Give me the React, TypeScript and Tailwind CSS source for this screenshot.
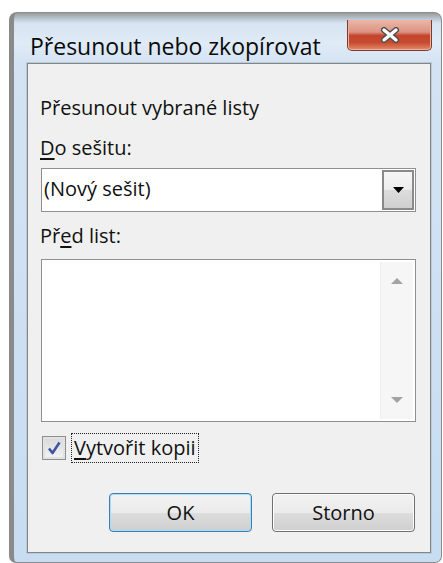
// Windows 7 style "move or copy sheet" dialog
function CloseGlyph() {
  return (
    <svg width="22" height="16" viewBox="0 0 22 16">
      <path d="M5 3 L17 13 M17 3 L5 13" stroke="#4b4b4b" strokeWidth="6" strokeLinecap="round" fill="none" />
      <path d="M5 3 L17 13 M17 3 L5 13" stroke="#ffffff" strokeWidth="3.4" strokeLinecap="round" fill="none" />
    </svg>
  );
}

function DropArrow() {
  return (
    <svg width="11" height="6" viewBox="0 0 11 6">
      <path d="M0 0 H11 L5.5 6 Z" fill="#000" />
    </svg>
  );
}

function ScrollArrow({ up }: { up?: boolean }) {
  return (
    <svg width="12" height="6" viewBox="0 0 12 6">
      <path d={up ? "M0 6 H12 L6 0 Z" : "M0 0 H12 L6 6 Z"} fill="#a3a3a3" />
    </svg>
  );
}

function CheckMark() {
  return (
    <svg width="16" height="16" viewBox="0 0 16 16">
      <path d="M3 8.5 L6.5 13 L13.5 2.5" stroke="#3d55a5" strokeWidth="2.6" fill="none" strokeLinejoin="round" />
    </svg>
  );
}

function DialogButton({ label, focused }: { label: string; focused?: boolean }) {
  return (
    <button
      className={
        focused
          ? "h-[39px] w-[143px] rounded-[4px] border border-[#3c7fb1] bg-[linear-gradient(to_bottom,#f2f2f2_0%,#ebebeb_50%,#dddddd_51%,#cfcfcf_100%)] text-[20px] text-[#111] shadow-[inset_0_0_0_1px_#a9dcf5]"
          : "h-[39px] w-[143px] rounded-[4px] border border-[#707070] bg-[linear-gradient(to_bottom,#f2f2f2_0%,#ebebeb_50%,#dddddd_51%,#cfcfcf_100%)] text-[20px] text-[#111] shadow-[inset_0_0_0_1px_#fcfcfc]"
      }
    >
      {label}
    </button>
  );
}

export default function App() {
  return (
    <div className="h-[563px] w-[443px] overflow-hidden bg-white pl-[9px] pr-[1px] pt-[12px] font-['Open_Sans','Noto_Sans',sans-serif] text-[#111]">
      <div className="flex h-[551px] flex-col rounded-t-[8px] rounded-b-[7px] border border-l-[5px] border-[#8c8c8c] border-l-[#8a8a8a] bg-[linear-gradient(to_bottom,#9a9a9a_0px,#bcc8d3_6px,#d6e3f0_10px,#e0ebf7_30px,#d3e3f3_50px,#c8ddf1_100%)]">
        {/* title bar */}
        <div className="flex h-[50px] items-start justify-between">
          <div className="pl-[16px] pt-[19px] text-[23px] leading-[28px] text-[#0a0a0a]">Přesunout nebo zkopírovat</div>
          <div className="mr-[9px] mt-[7px] flex h-[31px] w-[85px] items-center justify-center rounded-b-[5px] border border-t-0 border-[#7b3b2e] bg-[linear-gradient(to_bottom,#ebb7aa_0%,#dd9382_40%,#c3442c_52%,#c84b31_75%,#e28c66_100%)] shadow-[inset_0_0_0_1px_#efb19f]">
            <CloseGlyph />
          </div>
        </div>

        {/* client area */}
        <div className="ml-[13px] mr-[10px] mb-[9px] flex flex-1 flex-col border border-[#858585] bg-[#f0f0f0] pl-[12px] pr-[14px] pt-[32px] text-[20px] leading-[24px] shadow-[0_0_0_1px_#b8cadb]">
          <div>Přesunout vybrané listy</div>
          <div className="mt-[16px]">
            <span className="underline underline-offset-[3px]">D</span>o sešitu:
          </div>

          {/* combobox */}
          <div className="ml-[1px] mt-[8px] flex h-[44px] items-stretch border border-[#8e8f8f] bg-white">
            <div className="flex flex-1 items-center pl-[2px] pb-[2px]">(Nový sešit)</div>
            <div className="my-[1px] mr-[1px] flex w-[32px] items-center justify-center border-2 border-[#8a8a8a] bg-[linear-gradient(to_bottom,#f6f6f6_0%,#ededed_48%,#dcdcdc_52%,#d0d0d0_100%)]">
              <DropArrow />
            </div>
          </div>

          <div className="mt-[12px]">
            Př<span className="underline underline-offset-[3px]">e</span>d list:
          </div>

          {/* listbox */}
          <div className="ml-[1px] mt-[11px] flex h-[163px] border border-[#8e8f8f] bg-white p-[2px]">
            <div className="flex-1" />
            <div className="flex w-[33px] flex-col items-center justify-between border-l border-[#ececec] bg-[#f6f6f6] py-[16px]">
              <ScrollArrow up />
              <ScrollArrow />
            </div>
          </div>

          {/* copy checkbox */}
          <div className="mt-[11px] flex h-[30px] items-center">
            <div className="ml-[2px] flex h-[24px] w-[24px] items-center justify-center border border-[#8e8f8f] bg-[linear-gradient(to_bottom,#d8d8d8,#f4f4f4)] shadow-[inset_0_0_0_2px_#e2e2e2]">
              <CheckMark />
            </div>
            <div className="ml-[5px] flex h-[30px] items-center border border-dotted border-[#222] px-[2px]">
              <span className="underline underline-offset-[3px]">V</span>ytvořit kopii
            </div>
          </div>

          {/* dialog buttons */}
          <div className="mt-[30px] flex justify-end gap-[20px] pr-[1px]">
            <DialogButton label="OK" focused />
            <DialogButton label="Storno" />
          </div>
        </div>
      </div>
    </div>
  );
}
